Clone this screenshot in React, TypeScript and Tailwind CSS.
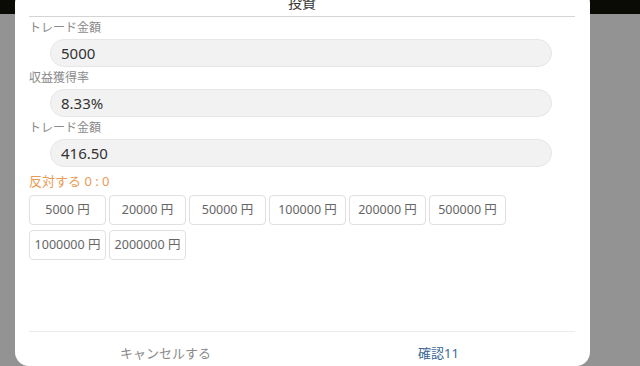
import { FunctionComponent } from 'react';

const amounts = ['5000', '20000', '50000', '100000', '200000', '500000', '1000000', '2000000'];

interface FieldProps {
  label: string;
  value: string;
}

const Field: FunctionComponent<FieldProps> = ({ label, value }: FieldProps) => {
  return (
    <div className="flex flex-col">
      <div className="h-[22px] text-[12px] leading-[22px] text-[#8a8a8a]">{label}</div>
      <div className="ml-[21px] mr-[23px] flex h-[28px] items-center rounded-full border border-[#e6e6e6] bg-[#f2f2f2] pl-[10px] text-[15px] text-[#333]">
        {value}
      </div>
    </div>
  );
};

const App: FunctionComponent = () => {
  return (
    <div
      className="relative flex h-[366px] w-[640px] flex-col overflow-hidden bg-[#939393]"
      style={{ fontFamily: '"Noto Sans", "Noto Sans CJK JP", sans-serif' }}
    >
      <div className="h-[14px] bg-[#0b0b06]" />

      <div className="absolute left-[15px] top-[-11px] flex h-[377px] w-[575px] flex-col rounded-[14px] bg-white pl-[14px] pr-[15px]">
        <div className="border-b border-[#d4d4d4] pb-[3px] pt-[4px] text-center text-[14px] leading-[20px] text-[#333]">
          投資
        </div>

        <Field label="トレード金額" value="5000" />
        <Field label="収益獲得率" value="8.33%" />
        <Field label="トレード金額" value="416.50" />

        <div className="h-[28px] text-[13px] leading-[28px] text-[#eb9a55]">反対する 0 : 0</div>

        <div className="flex flex-wrap gap-x-[3px] gap-y-[5px] pr-[60px]">
          {amounts.map((a) => (
            <div
              key={a}
              className="flex h-[30px] w-[77px] items-center justify-center rounded-[4px] border border-[#e0e0e0] text-[12.5px] text-[#666]"
            >
              {a} 円
            </div>
          ))}
        </div>

        <div className="flex-1" />

        <div className="flex h-[35px] border-t border-[#ebebeb] pt-[12px] text-[13px] leading-[18px]">
          <div className="flex-1 text-center text-[#8a8a8a]">キャンセルする</div>
          <div className="flex-1 text-center text-[#3b6794]">確認11</div>
        </div>
      </div>
    </div>
  );
};

export default App;
